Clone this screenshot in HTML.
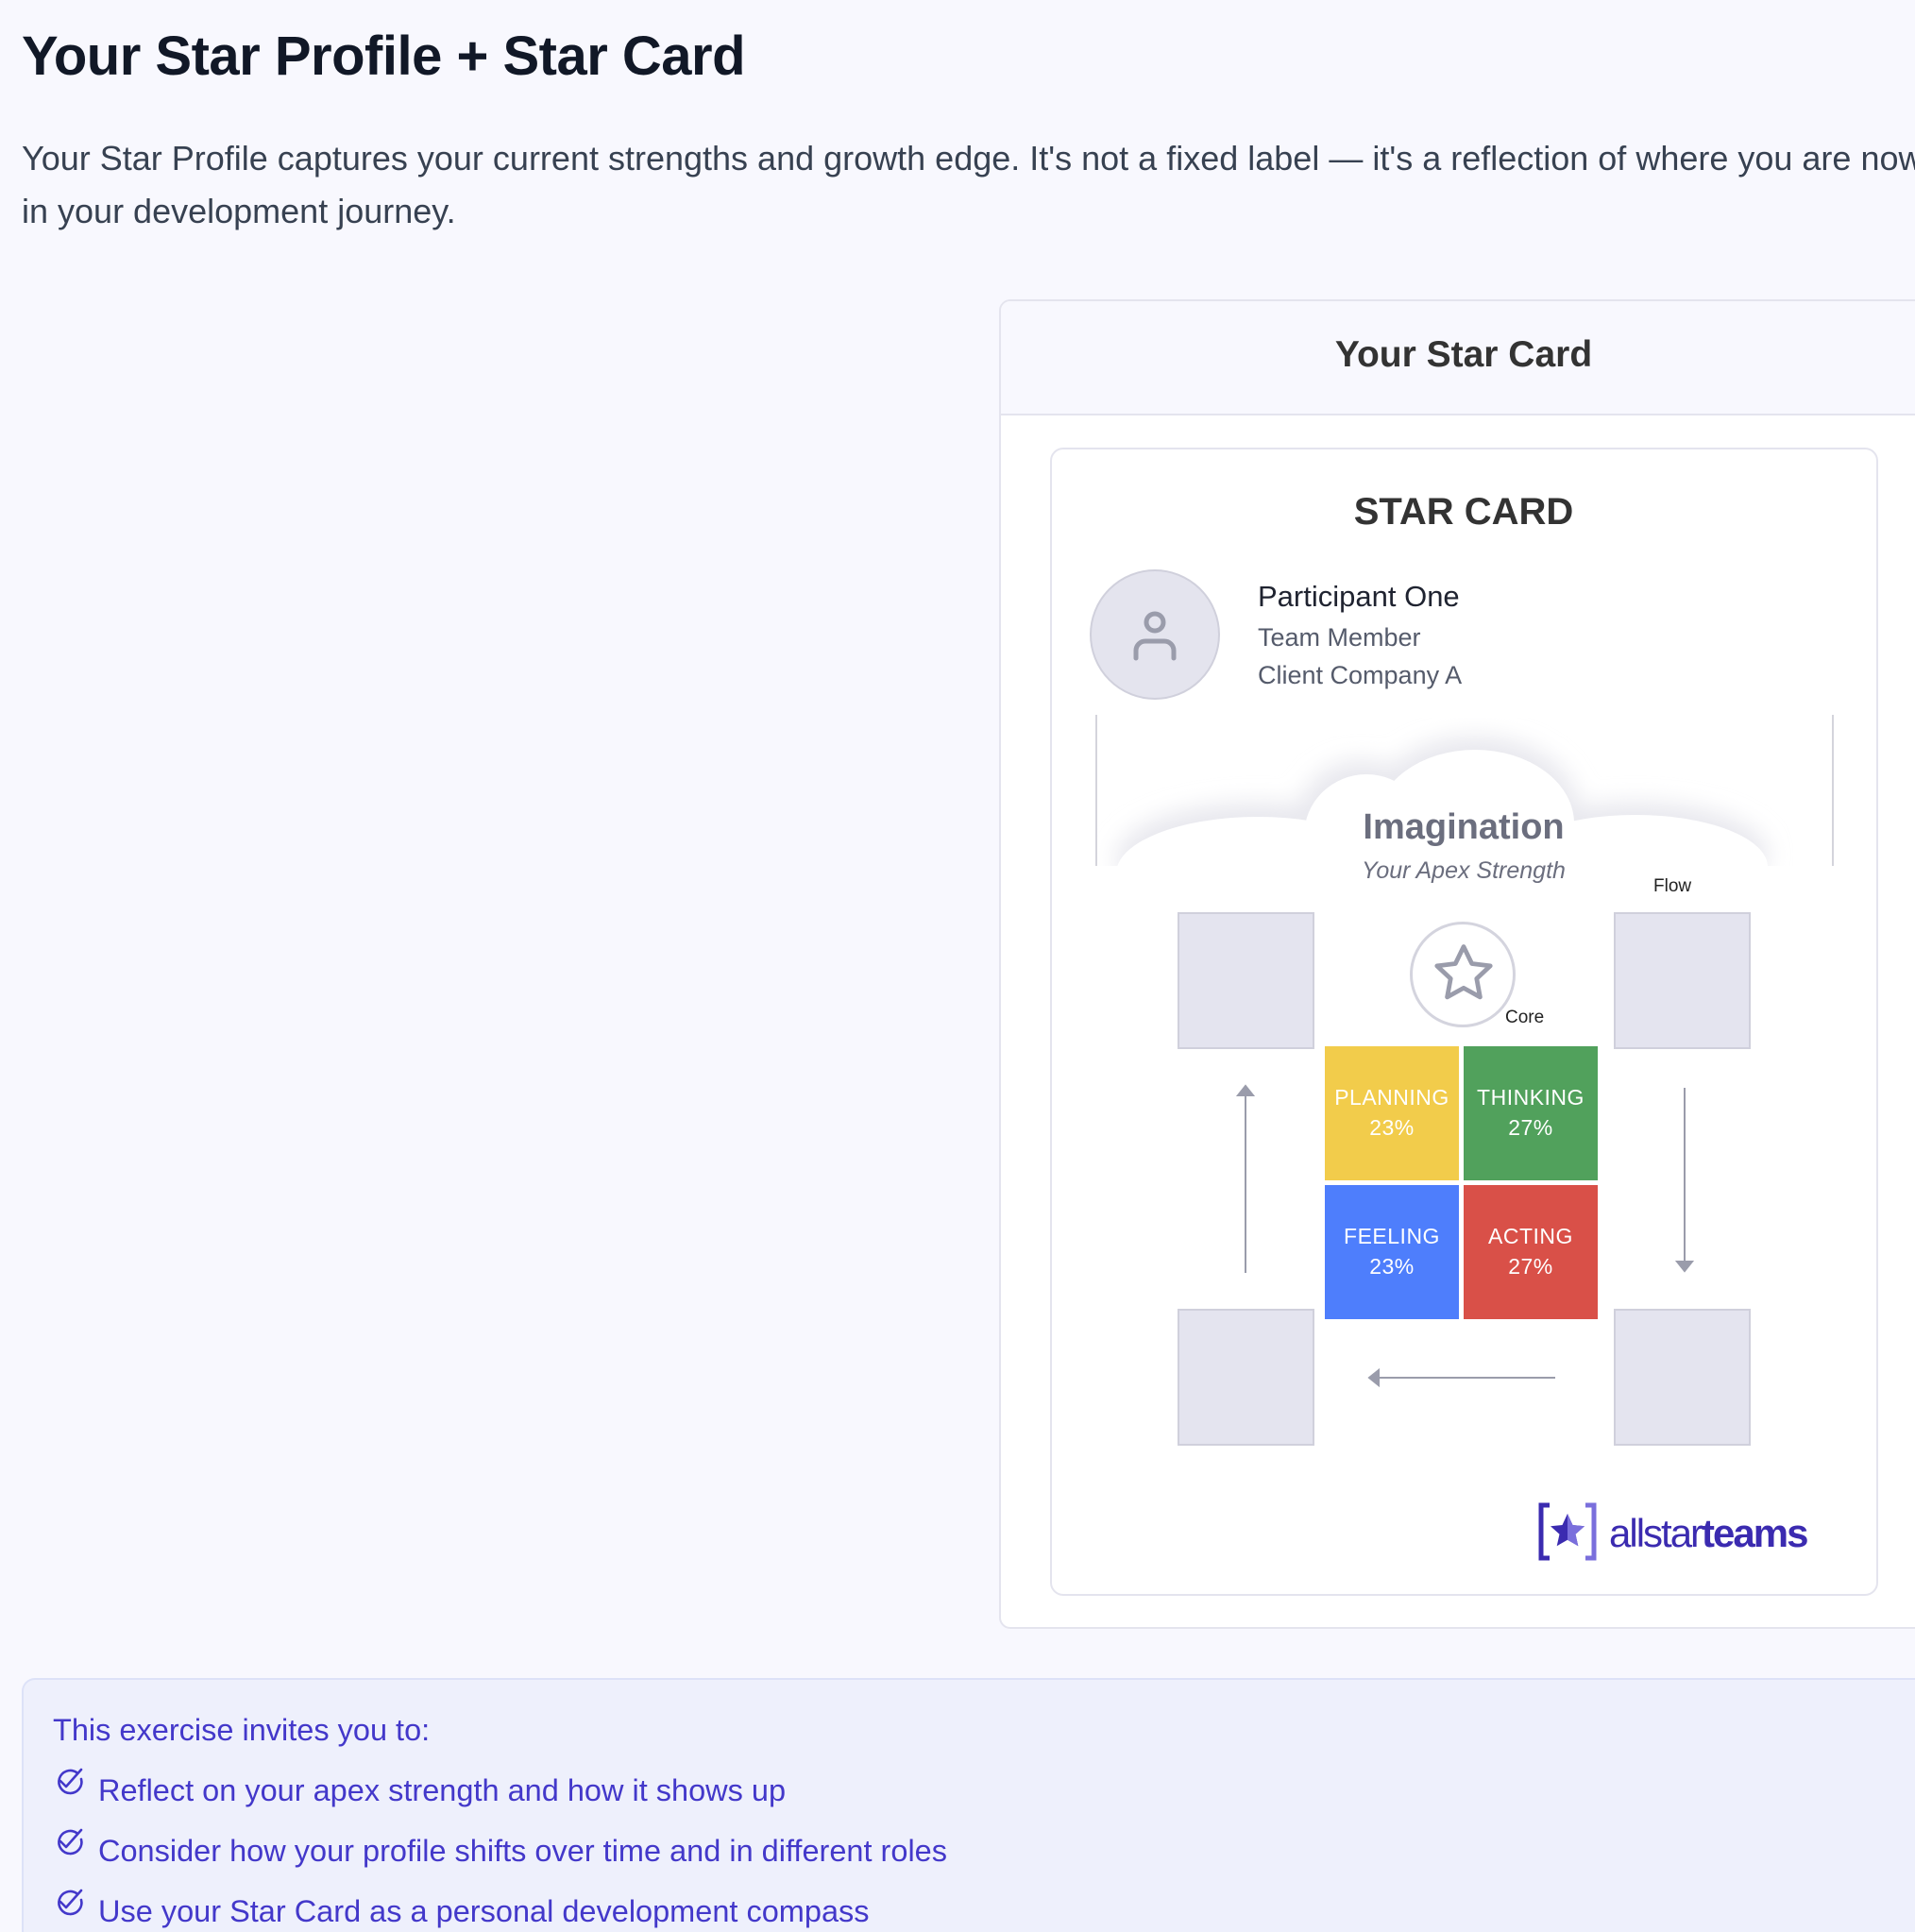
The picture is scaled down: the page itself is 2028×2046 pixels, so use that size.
<!DOCTYPE html>
<html style="width:2028px;height:2046px;overflow:hidden"><head><meta charset="utf-8"><style>
*{margin:0;padding:0;box-sizing:border-box}
body{width:2028px;height:2046px;overflow:hidden;background:#f8f8fe;font-family:"Liberation Sans",sans-serif;position:relative;color:#111827}
.a{position:absolute;white-space:nowrap}
h1{position:absolute;left:23px;top:26px;font-size:58px;font-weight:bold;color:#111827;letter-spacing:-0.5px}
.p{left:23px;top:140px;font-size:36px;line-height:56px;color:#374151}
.panel{position:absolute;left:1058px;top:317px;width:1000px;height:1408px;background:#fff;border:2px solid #e4e4ee;border-radius:12px;overflow:hidden}
.ph{position:absolute;left:0;top:0;right:0;height:121px;background:#f8f8fe;border-bottom:2px solid #e4e4ee}
.card{position:absolute;left:1112px;top:474px;width:877px;height:1216px;background:#fff;border:2px solid #e4e4ee;border-radius:14px}
.sq{position:absolute;width:145px;height:145px;background:#e4e4ef;border:2px solid #d0d0dc}
.q{position:absolute;width:142px;height:142px;color:#fff;font-size:23px;line-height:32px;text-align:center;padding-top:38px;letter-spacing:0.5px}
.c{text-align:center;transform:translateX(-50%)}
.box{position:absolute;left:23px;top:1777px;width:2100px;height:269px;background:#eef0fc;border:2px solid #dde2f8;border-bottom:none;border-radius:14px 14px 0 0}
.li{font-size:32.5px;color:#4338ca}
</style></head><body>
<h1>Your Star Profile + Star Card</h1>
<div class="a p">Your Star Profile captures your current strengths and growth edge. It's not a fixed label — it's a reflection of where you are now<br>in your development journey.</div>

<div class="panel"><div class="ph"></div></div>
<div class="a c" style="left:1550px;top:354px;font-size:39px;font-weight:bold;color:#333">Your Star Card</div>

<div class="card"></div>
<div class="a c" style="left:1550px;top:520px;font-size:40px;font-weight:bold;color:#333">STAR CARD</div>
<div class="a" style="left:1154px;top:603px;width:138px;height:138px;border-radius:50%;background:#e4e4ee;border:2px solid #d0d0dc"></div>
<svg class="a" style="left:1193px;top:642px" width="60" height="60" viewBox="0 0 60 60" fill="none" stroke="#9a9cab" stroke-width="5" stroke-linecap="round"><circle cx="30" cy="17" r="9"/><path d="M10 55V47a10 10 0 0 1 10-10h20a10 10 0 0 1 10 10v8"/></svg>
<div class="a" style="left:1332px;top:614px;font-size:31px;color:#1f2330">Participant One</div>
<div class="a" style="left:1332px;top:660px;font-size:27px;color:#555b6b">Team Member</div>
<div class="a" style="left:1332px;top:700px;font-size:27px;color:#555b6b">Client Company A</div>

<div class="a" style="left:1160px;top:757px;width:2px;height:160px;background:#d4d4dc"></div>
<div class="a" style="left:1940px;top:757px;width:2px;height:160px;background:#d4d4dc"></div>
<svg class="a" style="left:1162px;top:760px" width="778" height="160" viewBox="0 0 778 160">
<defs><filter id="b" x="-20%" y="-50%" width="140%" height="200%"><feGaussianBlur stdDeviation="12"/></filter></defs>
<g filter="url(#b)" fill="#e8e8ee"><ellipse cx="170" cy="150" rx="150" ry="60"/><ellipse cx="280" cy="115" rx="70" ry="70"/><ellipse cx="400" cy="100" rx="110" ry="80"/><ellipse cx="570" cy="145" rx="140" ry="55"/></g>
<g fill="#fff"><ellipse cx="170" cy="165" rx="150" ry="60"/><ellipse cx="285" cy="125" rx="66" ry="65"/><ellipse cx="400" cy="112" rx="105" ry="78"/><ellipse cx="570" cy="158" rx="140" ry="55"/></g>
</svg>
<div class="a" style="left:1162px;top:917px;width:778px;height:20px;background:#fff"></div>
<div class="a c" style="left:1550px;top:855px;font-size:38px;font-weight:bold;color:#6b6e7e">Imagination</div>
<div class="a c" style="left:1550px;top:908px;font-size:25px;font-style:italic;color:#6b6e7e">Your Apex Strength</div>
<div class="a" style="left:1751px;top:928px;font-size:19px;color:#222">Flow</div>

<div class="sq" style="left:1247px;top:966px"></div>
<div class="sq" style="left:1709px;top:966px"></div>
<div class="sq" style="left:1247px;top:1386px"></div>
<div class="sq" style="left:1709px;top:1386px"></div>

<div class="a" style="left:1493px;top:976px;width:112px;height:112px;border-radius:50%;background:#fff;border:3px solid #d4d4de"></div>
<svg class="a" style="left:1514px;top:995px" width="72" height="72" viewBox="0 0 24 24" fill="none" stroke="#9a9cab" stroke-width="1.6" stroke-linejoin="round"><path d="M12 2.5l2.9 6 6.5.8-4.8 4.5 1.2 6.5L12 17.1l-5.8 3.2 1.2-6.5L2.6 9.3l6.5-.8z"/></svg>
<div class="a" style="left:1594px;top:1067px;font-size:19px;color:#222">Core</div>

<div class="q" style="left:1403px;top:1108px;background:#f2cc4b">PLANNING<br>23%</div>
<div class="q" style="left:1550px;top:1108px;background:#51a15c">THINKING<br>27%</div>
<div class="q" style="left:1403px;top:1255px;background:#4e7efc">FEELING<br>23%</div>
<div class="q" style="left:1550px;top:1255px;background:#d95048">ACTING<br>27%</div>

<svg class="a" style="left:0;top:0" width="2028" height="2046" fill="none" stroke="#9a9cab" stroke-width="2">
<path d="M1319 1348V1156"/><path d="M1311 1160l8-10 8 10z" fill="#9a9cab"/>
<path d="M1784 1152V1340"/><path d="M1776 1336l8 10 8-10z" fill="#9a9cab"/>
<path d="M1647 1459H1456"/><path d="M1460 1451l-10 8 10 8z" fill="#9a9cab"/>
</svg>

<svg class="a" style="left:1629px;top:1591px" width="62" height="62" viewBox="0 0 62 62">
<path d="M12 3H3v56h9" fill="none" stroke="#3b2bb0" stroke-width="5"/>
<path d="M50 3h9v56h-9" fill="none" stroke="#7a6fdc" stroke-width="5"/>
<path d="M31 12l5.5 12 12.5 1.2-9.5 8.5 2.8 12.5L31 39.8 19.7 46.2l2.8-12.5-9.5-8.5L25.5 24z" fill="#3b2bb0"/>
<path d="M31 12l5.5 12 12.5 1.2-9.5 8.5 2.8 12.5L31 39.8z" fill="#7a6fdc"/>
</svg>
<div class="a" style="left:1704px;top:1600px;font-size:42px;color:#3b2bb0;letter-spacing:-2px">allstar<b style="color:#3b2bb0">teams</b></div>

<div class="box"></div>
<div class="a li" style="left:56px;top:1814px">This exercise invites you to:</div>
<svg class="a" style="left:0;top:0" width="200" height="2046" fill="none" stroke="#4338ca" stroke-width="2.6" stroke-linecap="round" stroke-linejoin="round">
<g><path d="M86 1884a12 12 0 1 1-5-7"/><path d="M64 1886l6 6 16-18"/></g>
<g transform="translate(0 64)"><path d="M86 1884a12 12 0 1 1-5-7"/><path d="M64 1886l6 6 16-18"/></g>
<g transform="translate(0 128)"><path d="M86 1884a12 12 0 1 1-5-7"/><path d="M64 1886l6 6 16-18"/></g>
</svg>
<div class="a li" style="left:104px;top:1878px">Reflect on your apex strength and how it shows up</div>
<div class="a li" style="left:104px;top:1942px">Consider how your profile shifts over time and in different roles</div>
<div class="a li" style="left:104px;top:2006px">Use your Star Card as a personal development compass</div>
</body></html>
